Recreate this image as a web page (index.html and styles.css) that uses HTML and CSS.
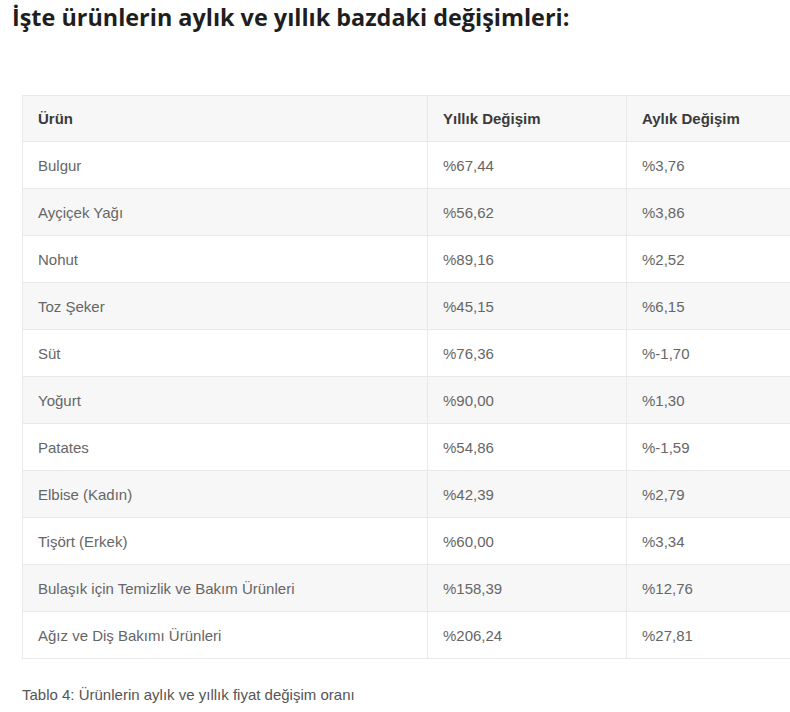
FILE: index.html
```html
<!DOCTYPE html>
<html lang="tr">
<head>
<meta charset="utf-8">
<link rel="stylesheet" href="styles.css">
</head>
<body>
<h2 class="title">İşte ürünlerin aylık ve yıllık bazdaki değişimleri:</h2>
<figure class="fig">
<table class="data">
<colgroup><col class="c1"><col class="c2"><col class="c3"></colgroup>
<thead>
<tr><th>Ürün</th><th>Yıllık Değişim</th><th>Aylık Değişim</th></tr>
</thead>
<tbody>
<tr><td>Bulgur</td><td>%67,44</td><td>%3,76</td></tr>
<tr><td>Ayçiçek Yağı</td><td>%56,62</td><td>%3,86</td></tr>
<tr><td>Nohut</td><td>%89,16</td><td>%2,52</td></tr>
<tr><td>Toz Şeker</td><td>%45,15</td><td>%6,15</td></tr>
<tr><td>Süt</td><td>%76,36</td><td>%-1,70</td></tr>
<tr><td>Yoğurt</td><td>%90,00</td><td>%1,30</td></tr>
<tr><td>Patates</td><td>%54,86</td><td>%-1,59</td></tr>
<tr><td>Elbise (Kadın)</td><td>%42,39</td><td>%2,79</td></tr>
<tr><td>Tişört (Erkek)</td><td>%60,00</td><td>%3,34</td></tr>
<tr><td>Bulaşık için Temizlik ve Bakım Ürünleri</td><td>%158,39</td><td>%12,76</td></tr>
<tr><td>Ağız ve Diş Bakımı Ürünleri</td><td>%206,24</td><td>%27,81</td></tr>
</tbody>
</table>
<figcaption class="cap">Tablo 4: Ürünlerin aylık ve yıllık fiyat değişim oranı</figcaption>
</figure>
</body>
</html>
```
FILE: styles.css
```css
html, body {
  margin: 0;
  padding: 0;
  overflow: hidden;
  background: #fff;
}
body {
  padding: 0 0 0 12px;
}
.title {
  margin: 0;
  padding-top: 2px;
  font-family: "Open Sans", "DejaVu Sans", sans-serif;
  font-weight: 700;
  font-size: 23.4px;
  line-height: 30px;
  color: #1e1e1e;
}
.fig {
  margin: 63px 0 0 10px;
  width: 803px;
}
.data {
  width: 803px;
  table-layout: fixed;
  border-collapse: collapse;
  font-family: "Liberation Sans", Arial, sans-serif;
  font-size: 15px;
  color: #666;
}
.c1 { width: 405px; }
.c2 { width: 199px; }
.c3 { width: 199px; }
.data th, .data td {
  height: 46px;
  padding: 0 15px;
  text-align: left;
  border: 1px solid #e9e9e9;
  vertical-align: middle;
  line-height: 17px;
}
.data thead th {
  height: 45px;
  font-weight: 700;
  color: #3a3a3a;
  background: #f7f7f7;
}
.data tbody tr:nth-child(even) td {
  background: #f7f7f7;
}
.cap {
  margin-top: 27px;
  font-family: "Liberation Sans", Arial, sans-serif;
  font-size: 15px;
  line-height: 18px;
  color: #555;
}
```
